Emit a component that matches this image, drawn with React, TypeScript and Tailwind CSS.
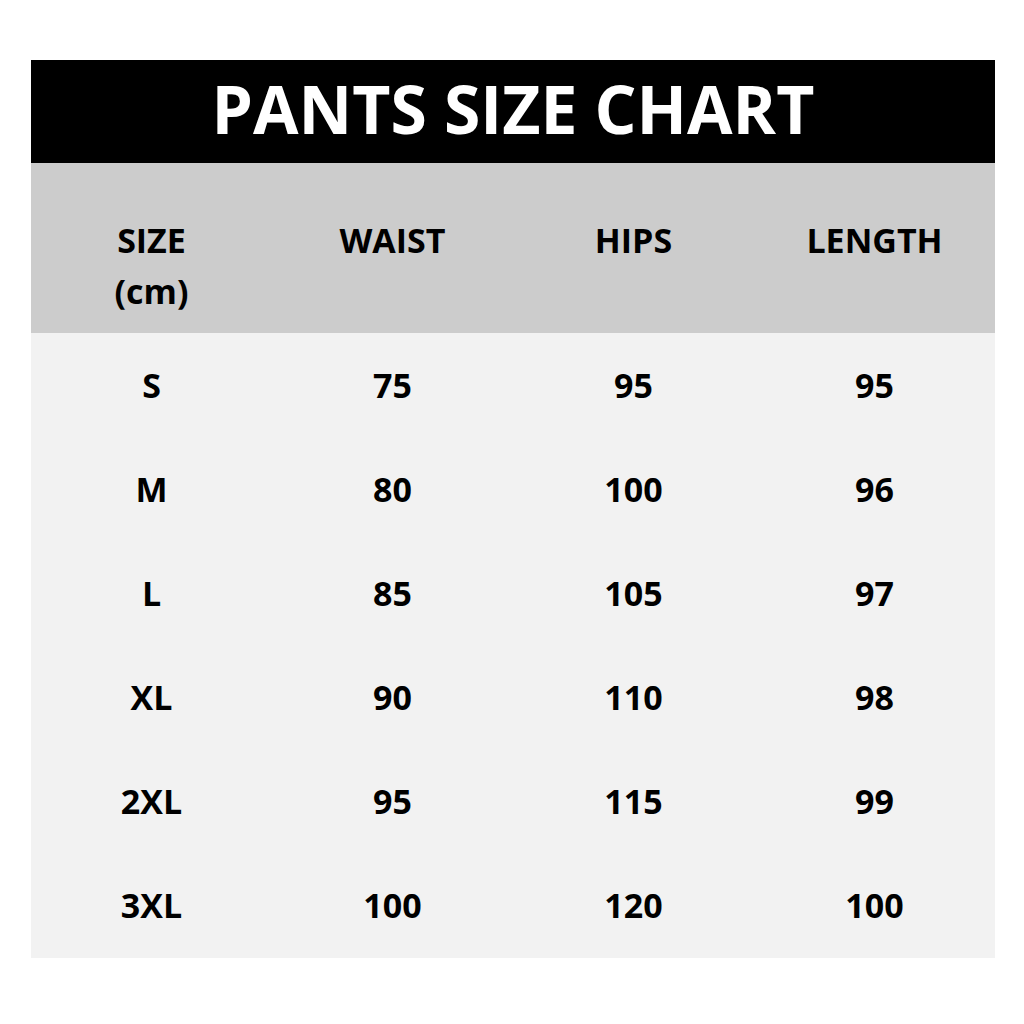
const headers = ['WAIST', 'HIPS', 'LENGTH'];

const rows: [string, number, number, number][] = [
  ['S', 75, 95, 95],
  ['M', 80, 100, 96],
  ['L', 85, 105, 97],
  ['XL', 90, 110, 98],
  ['2XL', 95, 115, 99],
  ['3XL', 100, 120, 100],
];

export default function App() {
  return (
    <div
      className="w-[1024px] h-[1024px] bg-white pt-[60px] px-[31px] text-black"
      style={{ fontFamily: '"Open Sans", "Liberation Sans", sans-serif' }}
    >
      <div className="w-[964px]">
        {/* title bar */}
        <div className="h-[103px] bg-black flex items-center justify-center pb-[8px]">
          <h1 className="text-white font-bold text-[66px] leading-none">PANTS SIZE CHART</h1>
        </div>

        {/* column headings */}
        <div className="h-[170px] bg-[#cccccc] grid grid-cols-4 pt-[52px] text-[34px] font-bold leading-[51px] text-center">
          <div>
            <div>SIZE</div>
            <div>(cm)</div>
          </div>
          {headers.map((h) => (
            <div key={h}>{h}</div>
          ))}
        </div>

        {/* values */}
        <div className="bg-[#f2f2f2] h-[625px] grid grid-rows-6 text-[34px] font-bold text-center">
          {rows.map((r) => (
            <div key={r[0]} className="grid grid-cols-4 items-center">
              {r.map((v, i) => (
                <div key={i}>{v}</div>
              ))}
            </div>
          ))}
        </div>
      </div>
    </div>
  );
}
